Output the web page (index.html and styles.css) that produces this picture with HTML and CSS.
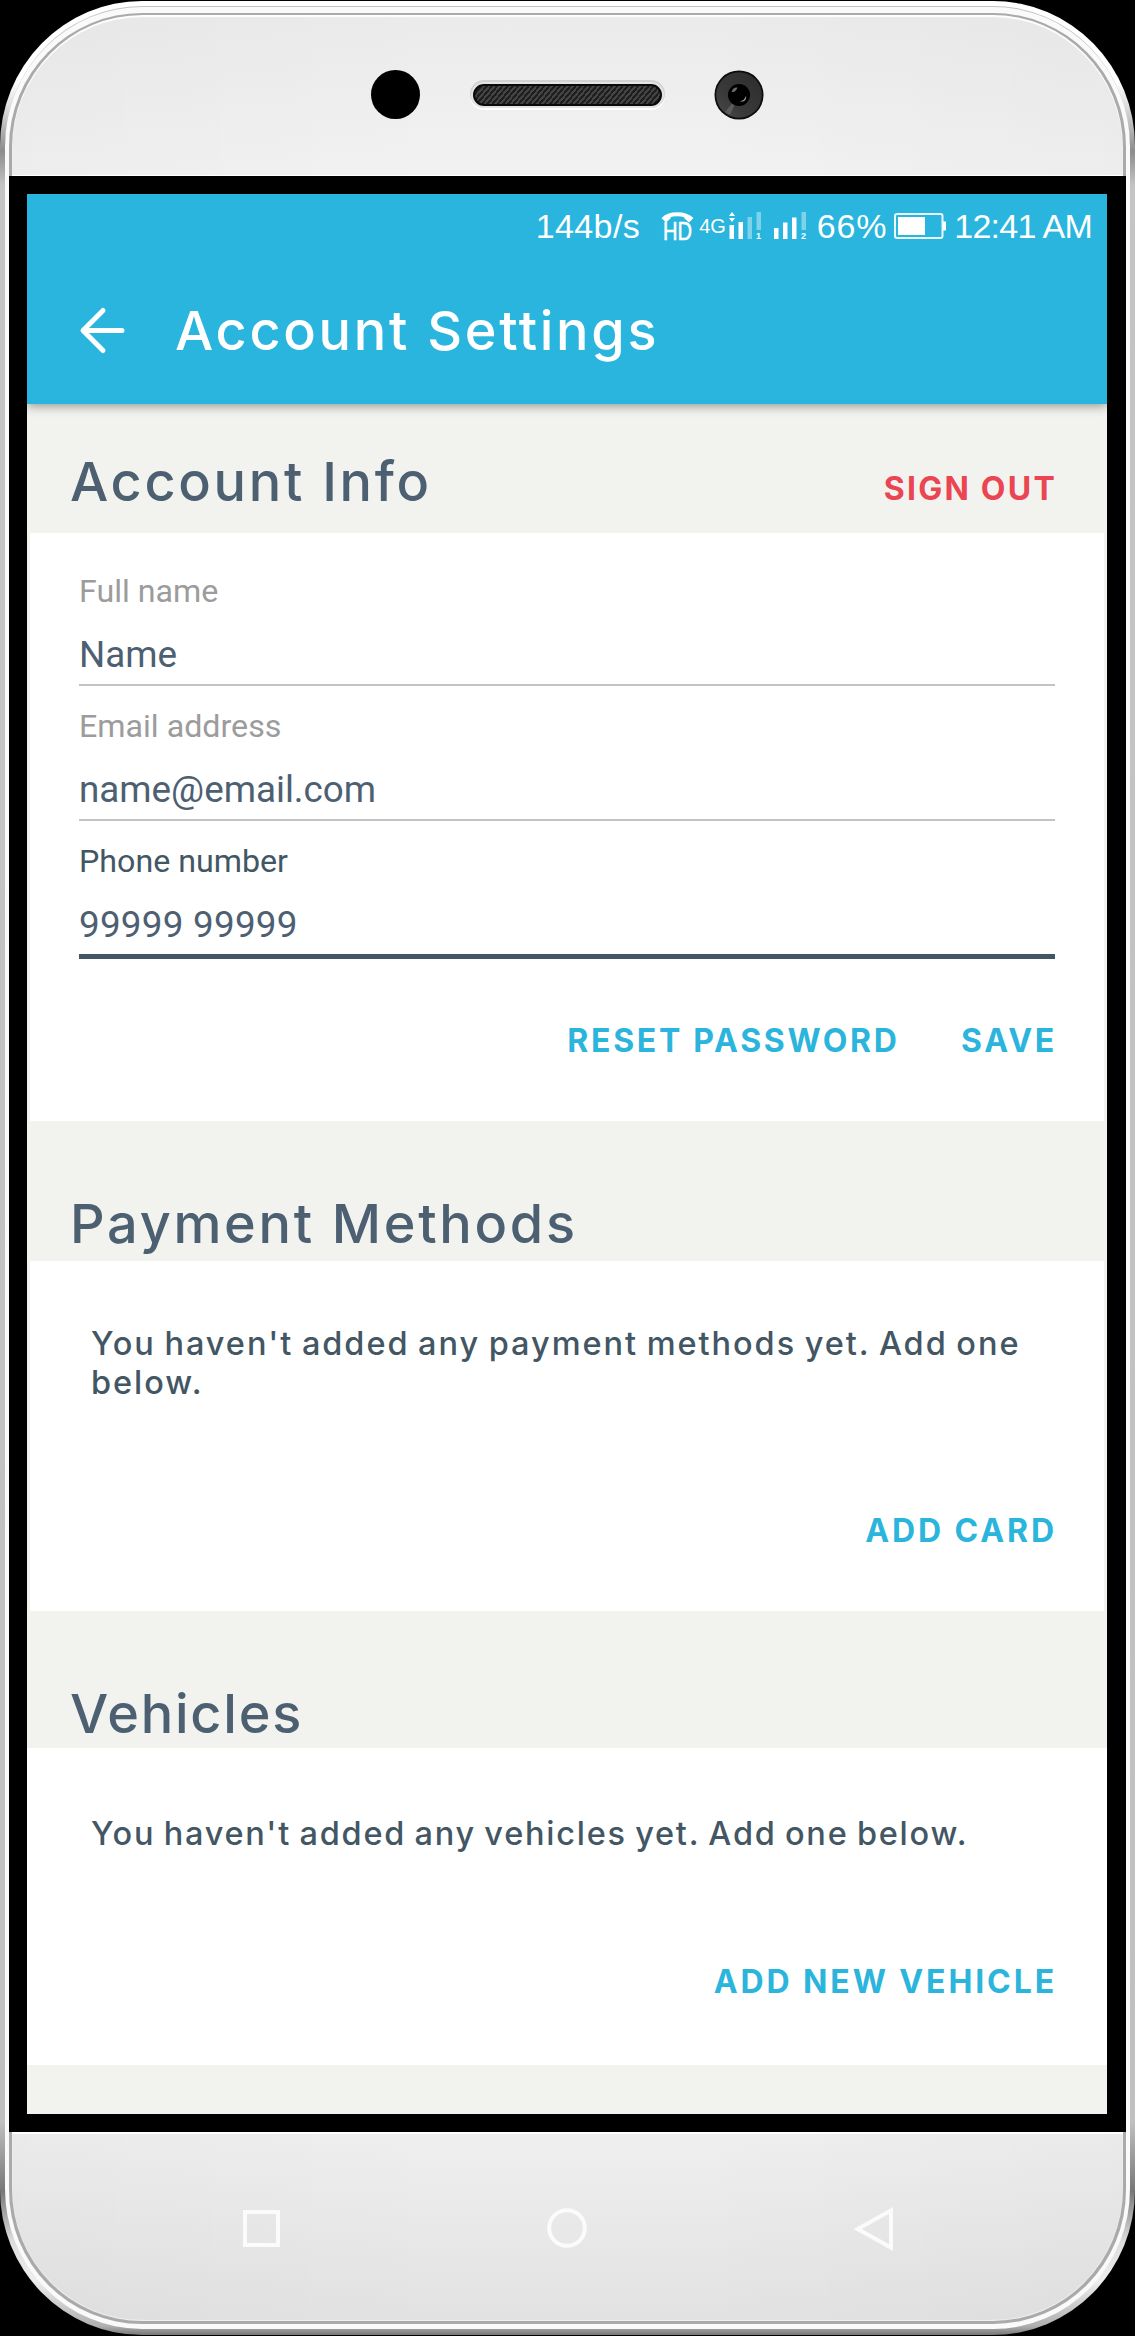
FILE: index.html
```html
<!DOCTYPE html>
<html lang="en">
<head>
<meta charset="utf-8">
<title>Account Settings</title>
<link rel="stylesheet" href="styles.css">
</head>
<body>
<div class="phone">
  <div class="rim">
    <div class="groove">
      <div class="plate">
        <div class="earpiece">
          <span class="sensor"></span>
          <span class="speaker"></span>
          <svg class="camera" viewBox="0 0 50 50">
            <defs>
              <linearGradient id="lens" x1="0" y1="1" x2="1" y2="0">
                <stop offset="0" stop-color="#4a4a4a"/>
                <stop offset=".35" stop-color="#3a3a3a"/>
                <stop offset="1" stop-color="#2c2c2c"/>
              </linearGradient>
            </defs>
            <circle cx="25" cy="25" r="24.5" fill="#0c0c0c"/>
            <circle cx="25" cy="25" r="22.8" fill="url(#lens)"/>
            <path d="M25 25 11 42 16 45Z" fill="#5c5c5c"/>
            <circle cx="25" cy="25" r="11" fill="#000"/>
            <path d="M17.5 22c1-4 4-5 6-4.500-1 3-3 5-6 4.500Z" fill="#6d6d6d"/>
            <path d="M26 31c3 0 5-2 6-5 1 3-2 7-6 5Z" fill="#a4a4a4"/>
          </svg>
        </div>
        <div class="bezel">
          <main class="screen">
            <header class="topbar">
              <div class="status">
                <span class="speed">144b/s</span>
                <svg class="hd" width="33" height="36" viewBox="0 -3 33 36">
                  <path d="M2 8.500C8 1.500 24 1.500 31 8.500" fill="none" stroke="#fff" stroke-width="4"/>
                  <path d="M1 7l6-3 3 3-5 4.500ZM32 7l-6-3-3 3 5 4.500Z" fill="#fff"/>
                  <text x="2" y="28.500" textLength="29" lengthAdjust="spacingAndGlyphs">HD</text>
                </svg>
                <span class="net">4G</span>
                <svg class="sig" width="32" height="28" viewBox="0 0 32 28">
                  <path d="M3 0l3 4H0zM3 10l3-4H0z" fill="#fff"/>
                  <path d="M.5 13H5v14H.5zM9.500 10H14v17H9.500z" fill="#fff"/>
                  <path d="M18.500 5H23v22h-4.500zM27.500 0H32v18h-4.500z" fill="#fff" opacity=".4"/>
                  <text x="27" y="27">1</text>
                </svg>
                <svg class="sig sig2" width="32" height="28" viewBox="0 0 32 28">
                  <path d="M0 16h4.500v11H0zM9 10.500h4.500V27H9zM18 5.500h4.500V27H18z" fill="#fff"/>
                  <path d="M27.500 0H32v18h-4.500z" fill="#fff" opacity=".4"/>
                  <text x="27" y="27">2</text>
                </svg>
                <span class="percent">66%</span>
                <svg class="battery" width="54" height="28" viewBox="0 0 54 28">
                  <rect x="2" y="2" width="47.500" height="24" rx="2" fill="none" stroke="#e9f8fd" stroke-width="2"/>
                  <rect x="5" y="5" width="27" height="18" fill="#fff"/>
                  <path d="M50 9.500h3v9h-3z" fill="#fff"/>
                </svg>
                <span class="time">12:41 AM</span>
              </div>
              <div class="appbar">
                <svg width="48" height="50" viewBox="0 0 48 50">
                  <path d="M43 24.500H5M24 4.500 4 24.500l20 20" fill="none" stroke="#fff" stroke-width="5" stroke-linecap="round" stroke-linejoin="round"/>
                </svg>
                <h1>Account Settings</h1>
              </div>
            </header>

            <div class="section-head first">
              <h2>Account Info</h2>
              <a class="action danger">SIGN OUT</a>
            </div>
            <section class="card account">
              <div class="field"><label>Full name</label><p>Name</p></div>
              <div class="field"><label>Email address</label><p>name@email.com</p></div>
              <div class="field focused"><label>Phone number</label><p class="digits">99999 99999</p></div>
              <div class="actions">
                <a class="action">RESET PASSWORD</a>
                <a class="action">SAVE</a>
              </div>
            </section>

            <div class="section-head payment-head"><h2>Payment Methods</h2></div>
            <section class="card payment">
              <p class="empty">You haven't added any payment methods yet. Add one below.</p>
              <div class="actions"><a class="action">ADD CARD</a></div>
            </section>

            <div class="section-head vehicle-head"><h2 class="tight">Vehicles</h2></div>
            <section class="card vehicles">
              <p class="empty">You haven't added any vehicles yet. Add one below.</p>
              <div class="actions"><a class="action">ADD NEW VEHICLE</a></div>
            </section>
          </main>
        </div>
        <nav class="keys">
          <svg width="37" height="37" viewBox="0 0 37 37"><path d="M2 2h33v33H2z"/></svg>
          <svg width="40" height="40" viewBox="0 0 40 40"><circle cx="20" cy="20" r="17.800"/></svg>
          <svg width="40" height="46" viewBox="0 0 40 46"><path d="M37 4.500v37L3.500 23z"/></svg>
        </nav>
      </div>
    </div>
  </div>
</div>
</body>
</html>
```
FILE: styles.css
```css
* { box-sizing: border-box; margin: 0; padding: 0; }

body {
  background: #000;
  font-family: Inter, "Open Sans", sans-serif;
  font-weight: 500;
}

/* Handset: nested rings, from the metal edge to the front plate */
.phone {
  width: 1135px;
  height: 2334px;
  margin-top: 1px;
  padding: 5px 5px 6px;
  border-radius: 142px / 145px;
  background: linear-gradient(#fff 0, #fff 80px, #ddd 105px, #8c8c8c 150px, #c4c4c4 185px, #c0c0c0 2120px, #777 2190px, #ddd 2240px, #eee 2280px, #b0b0b0 2325px, #777 2334px);
}
.rim {
  height: 100%;
  padding: 6px 4px 5px;
  border-radius: 137px / 140px;
  border-top: 1px solid #c2c2c2;
  background: #fafafa;
}
.groove {
  height: 100%;
  padding: 2px 3px 3px;
  border-radius: 133px / 134px;
  background: #aaa;
}
.plate {
  display: flex;
  flex-direction: column;
  height: 100%;
  border-radius: 130px / 132px;
  background:
    linear-gradient(90deg, rgba(0, 0, 0, .02), rgba(0, 0, 0, 0) 40%, rgba(0, 0, 0, 0) 60%, rgba(0, 0, 0, .02)),
    linear-gradient(#ebebeb, #f2f2f2 160px, #efefef 2115px, #e2e2e2);
  box-shadow: inset 0 2px 1px #fff, inset 0 -1px 1px #f2f2f2;
}

.earpiece {
  display: flex;
  align-items: center;
  justify-content: center;
  gap: 52.5px;
  height: 161px;
  padding-bottom: 1px;
  border-bottom: 1px solid #fff;
}
.sensor { width: 49px; height: 49px; border-radius: 50%; background: #000; }
.speaker {
  width: 189px;
  height: 22px;
  border: 2px solid #0a0a0a;
  border-radius: 11px;
  background: repeating-linear-gradient(130deg, #1e1e1e 0 2px, #444 2px 4px);
  box-shadow: 0 0 0 2px #e4e4e4, 0 -1px 0 3px #d2d2d2, 0 1px 0 3px #fff;
}
.camera { width: 50px; height: 50px; }

.bezel {
  height: 1956px;
  margin: 0 -3px;
  padding: 18px 19px 18px 18px;
  background: #000;
}
.screen { height: 1920px; background: #f2f3ee; overflow: hidden; }

.keys {
  display: flex;
  flex: 1;
  align-items: flex-start;
  justify-content: space-between;
  padding: 74px 229px 0 231px;
  border-top: 2px solid #fff;
  border-radius: 0 0 130px 130px / 0 0 132px 132px;
}
.keys svg { fill: none; stroke: #fbfbfb; stroke-width: 4; }
.keys svg:first-child { margin-top: 2px; }
.keys svg:last-child { margin-top: -2px; }

/* Blue header */
.topbar {
  position: relative;
  height: 210px;
  background: #29b5dd;
  box-shadow: 0 2px 10px rgba(0, 0, 0, .4);
  color: #fff;
}
.status {
  display: flex;
  align-items: center;
  justify-content: flex-end;
  height: 64px;
  padding-right: 15px;
  font: 34px/64px "Liberation Sans", Arial, sans-serif;
  white-space: nowrap;
}
.status svg { flex: none; overflow: visible; }
.status text { fill: #fff; font-weight: bold; }
.speed { letter-spacing: .4px; }
.hd { margin-left: 21px; }
.hd text { font-size: 26px; font-weight: normal; stroke: #fff; stroke-width: .6; }
.net { margin: 0 3px 0 5px; font-size: 20px; }
.sig { margin-top: -1px; }
.sig text { font-size: 9px; }
.sig2 { margin-left: 13px; }
.percent { margin-left: 11px; letter-spacing: .8px; }
.battery { margin: 0 7px 0 6px; }
.time { letter-spacing: -.74px; }

.appbar {
  display: flex;
  align-items: center;
  gap: 48px;
  height: 146px;
  padding-left: 52px;
}
h1 { font: 500 54px/62px Inter, sans-serif; letter-spacing: 2.7px; white-space: nowrap; }

/* Sections */
.section-head {
  display: flex;
  align-items: flex-start;
  justify-content: space-between;
  padding: 73px 50px 0 43px;
}
.first { height: 129px; padding-top: 48px; }
.first .action { margin-top: 17px; letter-spacing: 2.23px; }
.payment-head { height: 140px; }
.vehicle-head { height: 137px; }
h2 { color: #4d6072; font: 500 54px/60px Inter, sans-serif; letter-spacing: 2.7px; }
.tight { letter-spacing: 1.8px; }

.card { margin: 0 3px; padding: 0 47px 0 49px; background: #fff; }
.account { height: 588px; padding-top: 18px; }
.payment { height: 350px; padding-top: 63px; }
.vehicles { height: 317px; margin: 0; padding: 66px 50px 0 52px; }

.field {
  height: 135px;
  margin-right: 2px;
  padding: 20px 0 7px;
  border-bottom: 2px solid #c3c3c3;
  font-family: Roboto, sans-serif;
  font-weight: 400;
}
.field label { display: block; color: #9c9c9c; font-size: 32.2px; line-height: 40px; }
.field p { margin-top: 22px; color: #4d6072; font-size: 36.8px; line-height: 44px; }
.field .digits { letter-spacing: .25px; }
.focused { height: 138px; border-bottom: 5px solid #435663; }
.focused label { color: #435663; }

.empty {
  margin-right: -20px;
  padding-left: 12px;
  color: #435663;
  font-size: 32.5px;
  line-height: 39px;
  letter-spacing: 1.95px;
  word-spacing: -2px;
}
.vehicles .empty { letter-spacing: 1.75px; }

.actions { display: flex; justify-content: flex-end; gap: 61.5px; margin-top: 109px; }
.account .actions { margin-top: 62px; }
.action {
  color: #2bb4dc;
  font-size: 32px;
  font-weight: 700;
  line-height: 40px;
  letter-spacing: 2.9px;
  white-space: nowrap;
}
.account .action { letter-spacing: 2.7px; }
.danger { color: #eb4452; }
```
